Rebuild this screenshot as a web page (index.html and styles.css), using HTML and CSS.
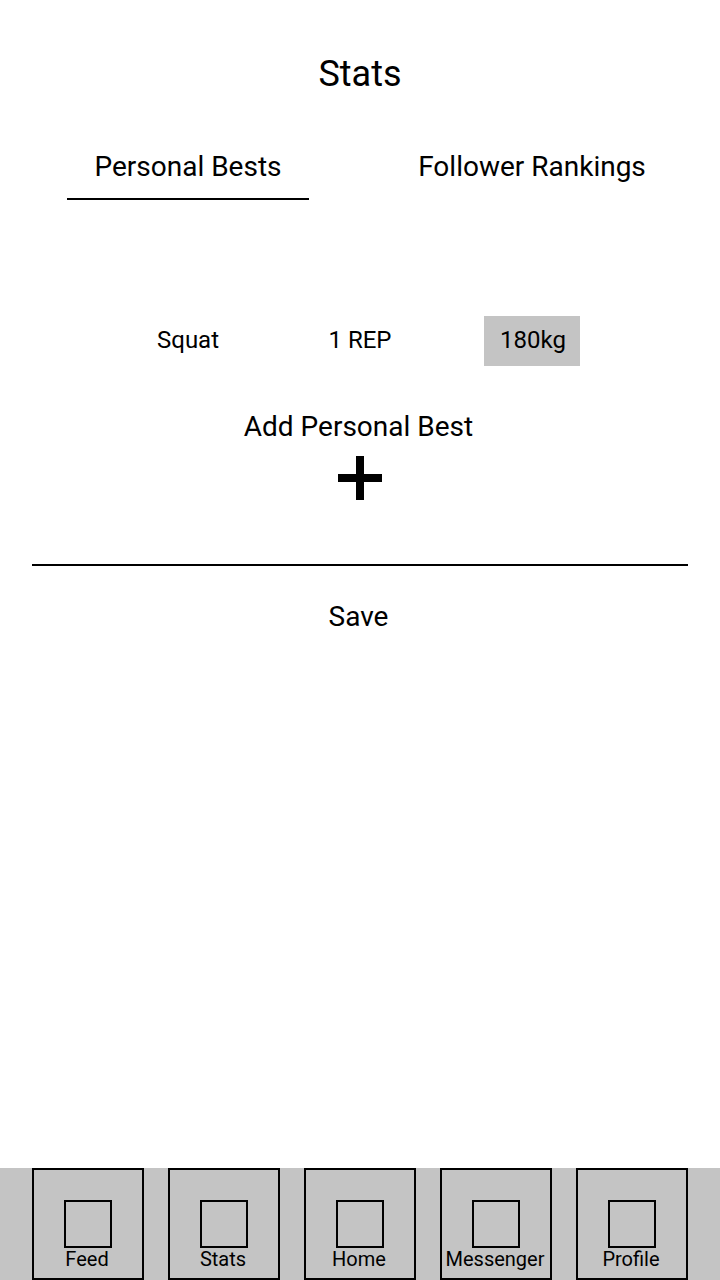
FILE: index.html
```html
<!DOCTYPE html>
<html lang="en">
<head>
<meta charset="utf-8">
<meta name="viewport" content="width=device-width, initial-scale=1">
<title>Stats</title>
<link rel="stylesheet" href="styles.css">
</head>
<body>
<div class="screen">
  <h1 class="title">Stats</h1>
  <div class="tabs" role="tablist">
    <button class="tab tab-active" type="button" role="tab" aria-selected="true">Personal Bests</button>
    <button class="tab" type="button" role="tab" aria-selected="false">Follower Rankings</button>
  </div>
  <form class="bests">
    <div class="record">
      <label for="squat-weight">Squat</label>
      <span>1 REP</span>
      <input class="weight" id="squat-weight" type="text" value="180kg">
    </div>
    <button class="add" type="button">
      <span class="caption">Add Personal Best</span>
      <svg class="plus" viewBox="0 0 44 44" aria-hidden="true"><path d="M18 0h8v18h18v8H26v18h-8V26H0v-8h18z"/></svg>
    </button>
    <div class="footer">
      <button class="save caption" type="submit">Save</button>
    </div>
  </form>
  <nav class="nav">
    <a class="nav-item" href="#feed"><span class="nav-icon"></span><span class="nav-label">Feed</span></a>
    <a class="nav-item" href="#stats"><span class="nav-icon"></span><span class="nav-label">Stats</span></a>
    <a class="nav-item" href="#home"><span class="nav-icon"></span><span class="nav-label">Home</span></a>
    <a class="nav-item" href="#messenger"><span class="nav-icon"></span><span class="nav-label">Messenger</span></a>
    <a class="nav-item" href="#profile"><span class="nav-icon"></span><span class="nav-label">Profile</span></a>
  </nav>
</div>
</body>
</html>
```

FILE: styles.css
```css
* {
  box-sizing: border-box;
}

body {
  margin: 0;
  background: #fff;
  color: #000;
  font-family: Roboto, "Liberation Sans", sans-serif;
}

button,
input {
  margin: 0;
  padding: 0;
  border: 0;
  border-radius: 0;
  background: none;
  color: inherit;
  font: inherit;
}

.screen {
  display: flex;
  flex-direction: column;
  min-height: 100vh;
}

.title {
  margin: 52px 0 0;
  font-size: 36px;
  font-weight: 400;
  line-height: 44px;
  text-align: center;
}

.tabs {
  display: grid;
  grid-template-columns: 1fr 1fr;
  justify-items: center;
  margin-top: 54px;
  padding: 0 16px;
}

.tab {
  width: 242px;
  height: 50px;
  padding-bottom: 14px;
  border-bottom: 2px solid transparent;
  font-size: 28px;
  line-height: 32px;
}

.tab-active {
  border-color: #000;
}

.bests {
  display: flex;
  flex-direction: column;
  padding: 0 32px;
}

.record {
  display: grid;
  grid-template-columns: repeat(3, 172px);
  justify-content: center;
  justify-items: center;
  margin-top: 116px;
  font-size: 24px;
  line-height: 48px;
}

.weight {
  width: 96px;
  height: 50px;
  padding: 0 0 2px 2px;
  background: #c4c4c4;
  text-align: center;
}

.caption {
  padding-right: 3px;
  font-size: 28px;
  line-height: 32px;
}

.add {
  display: flex;
  flex-direction: column;
  align-items: center;
  align-self: center;
  gap: 13px;
  margin-top: 45px;
}

.plus {
  width: 44px;
  height: 44px;
}

.footer {
  display: flex;
  justify-content: center;
  margin-top: 64px;
  padding: 35px 0;
  border-top: 2px solid #000;
}

.nav {
  display: flex;
  justify-content: center;
  gap: 24px;
  margin-top: auto;
  background: #c4c4c4;
}

.nav-item {
  display: flex;
  flex-direction: column;
  align-items: center;
  width: 112px;
  height: 112px;
  padding-top: 30px;
  border: 2px solid #000;
  color: inherit;
  text-decoration: none;
}

.nav-icon {
  width: 48px;
  height: 48px;
  border: 2px solid #000;
}

.nav-label {
  padding-right: 2px;
  font-size: 20px;
  line-height: 22px;
}
```
